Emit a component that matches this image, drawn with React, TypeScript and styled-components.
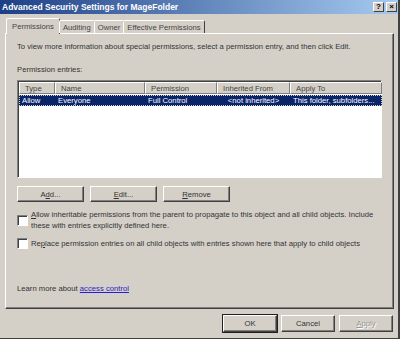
import React from "react";
import styled, { createGlobalStyle, css } from "styled-components";

const GlobalStyle = createGlobalStyle`
  html, body {
    margin: 0;
    padding: 0;
    background: #d4d0c8;
  }
  * {
    box-sizing: border-box;
  }
`;

const Window = styled.div`
  width: 400px;
  height: 339px;
  display: flex;
  flex-direction: column;
  background: #d4d0c8;
  font-family: "Liberation Sans", Arial, sans-serif;
  font-size: 7.7px;
  color: #000;
  border-right: 2px solid #404040;
  border-bottom: 1px solid #404040;
  overflow: hidden;
`;

const TitleBar = styled.div`
  height: 14px;
  display: flex;
  align-items: center;
  justify-content: space-between;
  padding: 0 1px 0 2px;
  background: linear-gradient(to right, #1d3f86, #a6caf0);
`;

const Title = styled.div`
  color: #fff;
  font-weight: bold;
  font-size: 8.5px;
`;

const TitleButtons = styled.div`
  display: flex;
  gap: 2px;
`;

const CaptionButton = styled.div`
  width: 11px;
  height: 10px;
  background: #d4d0c8;
  border: 1px solid;
  border-color: #fff #404040 #404040 #fff;
  display: flex;
  align-items: center;
  justify-content: center;
  font-weight: bold;
  font-size: 8px;
  line-height: 1;
`;

const Body = styled.div`
  flex: 1;
  display: flex;
  flex-direction: column;
  padding: 3px 4px 0 5px;
`;

const TabStrip = styled.div`
  display: flex;
  align-items: flex-end;
  height: 16px;
  padding-left: 3px;
  position: relative;
  z-index: 1;
`;

const Tab = styled.div<{ $active?: boolean }>`
  height: 13px;
  padding: 0 3px;
  display: flex;
  align-items: center;
  color: #444;
  border: 1px solid;
  border-color: #fff #404040 transparent #fff;
  border-bottom: none;
  border-radius: 2px 2px 0 0;
  margin-left: -1px;
  ${(p) =>
    p.$active &&
    css`
      background: #d4d0c8;
      margin: 0 0 -1px -2px;
      padding: 0 5px;
      height: 16px;
    `}
`;

const Panel = styled.div`
  width: 389px;
  height: 276px;
  border: 1px solid;
  border-color: #fff #404040 #404040 #fff;
  box-shadow: inset -1px -1px 0 #808080;
  padding: 8px 11px 0 11px;
  display: flex;
  flex-direction: column;
`;

const Text = styled.div<{ $mt?: number; $mb?: number }>`
  color: #333;
  margin-top: ${(p) => p.$mt ?? 0}px;
  margin-bottom: ${(p) => p.$mb ?? 0}px;
  line-height: 10px;
  white-space: nowrap;
`;

const List = styled.div`
  margin-top: 5px;
  width: 365px;
  height: 98px;
  background: #fff;
  border: 1px solid;
  border-color: #808080 #fff #fff #808080;
  box-shadow: inset 1px 1px 0 #404040;
  padding: 1px 0 0 1px;
`;

const Grid = styled.div`
  display: grid;
  grid-template-columns: 36px 90px 72px 73px 92px;
`;

const HeaderCell = styled.div`
  height: 12px;
  background: #d4d0c8;
  color: #444;
  border: 1px solid;
  border-color: #fff #808080 #808080 #fff;
  padding-left: 5px;
  display: flex;
  align-items: center;
  white-space: nowrap;
`;

const Row = styled.div`
  grid-column: 1 / -1;
  display: grid;
  grid-template-columns: 36px 90px 72px 73px 92px;
  background: #0a246a;
  color: #fff;
  height: 11px;
  margin-top: 1px;
  outline: 1px dotted #d4d0c8;
  outline-offset: -1px;
`;

const Cell = styled.div<{ $center?: boolean }>`
  padding-left: ${(p) => (p.$center ? 0 : 3)}px;
  text-align: ${(p) => (p.$center ? "center" : "left")};
  line-height: 11px;
  white-space: nowrap;
  overflow: hidden;
`;

const ButtonRow = styled.div`
  display: flex;
  gap: 6px;
  margin-top: 8px;
`;

const Button = styled.div<{ $w?: number; $disabled?: boolean; $default?: boolean }>`
  width: ${(p) => p.$w ?? 67}px;
  height: ${(p) => (p.$w ? 17 : 16)}px;
  display: flex;
  align-items: center;
  justify-content: center;
  background: #d4d0c8;
  color: ${(p) => (p.$disabled ? "#9a9890" : "#333")};
  text-shadow: ${(p) => (p.$disabled ? "1px 1px 0 #fff" : "none")};
  border: 1px solid;
  border-color: #fff #404040 #404040 #fff;
  box-shadow: inset -1px -1px 0 #808080;
  ${(p) =>
    p.$default &&
    css`
      outline: 1px solid #202020;
    `}
`;

const Underline = styled.span`
  text-decoration: underline;
`;

const CheckRow = styled.div<{ $mt: number }>`
  display: flex;
  align-items: center;
  gap: 3px;
  margin-top: ${(p) => p.$mt}px;
`;

const Checkbox = styled.div`
  flex: none;
  width: 11px;
  height: 11px;
  background: #fff;
  border: 1px solid;
  border-color: #808080 #fff #fff #808080;
  box-shadow: inset 1px 1px 0 #404040;
`;

const CheckLabel = styled.div<{ $keyFirst?: boolean }>`
  color: #333;
  line-height: 11px;
  ${(p) =>
    p.$keyFirst &&
    css`
      &::first-letter {
        text-decoration: underline;
      }
    `}
`;

const Spacer = styled.div`
  flex: 1;
`;

const Link = styled.span`
  color: #2a1ccc;
  text-decoration: underline;
`;

const Footer = styled.div`
  display: flex;
  justify-content: flex-end;
  gap: 4px;
  padding: 6px 1px 0 0;
`;

const columns = ["Type", "Name", "Permission", "Inherited From", "Apply To"];

export default function App() {
  return (
    <>
      <GlobalStyle />
      <Window>
        <TitleBar>
          <Title>Advanced Security Settings for MageFolder</Title>
          <TitleButtons>
            <CaptionButton>?</CaptionButton>
            <CaptionButton>×</CaptionButton>
          </TitleButtons>
        </TitleBar>
        <Body>
          <TabStrip>
            <Tab $active>Permissions</Tab>
            <Tab>Auditing</Tab>
            <Tab>Owner</Tab>
            <Tab>Effective Permissions</Tab>
          </TabStrip>
          <Panel>
            <Text>
              To view more information about special permissions, select a permission entry, and then click Edit.
            </Text>
            <Text $mt={13}>Permission entries:</Text>
            <List>
              <Grid>
                {columns.map((c) => (
                  <HeaderCell key={c}>{c}</HeaderCell>
                ))}
                <Row>
                  <Cell>Allow</Cell>
                  <Cell>Everyone</Cell>
                  <Cell>Full Control</Cell>
                  <Cell $center>&lt;not inherited&gt;</Cell>
                  <Cell>This folder, subfolders...</Cell>
                </Row>
              </Grid>
            </List>
            <ButtonRow>
              <Button>
                <span>
                  A<Underline>d</Underline>d...
                </span>
              </Button>
              <Button>
                <span>
                  <Underline>E</Underline>dit...
                </span>
              </Button>
              <Button>
                <span>
                  <Underline>R</Underline>emove
                </span>
              </Button>
            </ButtonRow>
            <CheckRow $mt={7}>
              <Checkbox />
              <CheckLabel $keyFirst>
                Allow inheritable permissions from the parent to propagate to this object and all child objects. Include these with entries explicitly defined here.
              </CheckLabel>
            </CheckRow>
            <CheckRow $mt={7}>
              <Checkbox />
              <CheckLabel>
                Re<Underline>p</Underline>lace permission entries on all child objects with entries shown here that apply to child objects
              </CheckLabel>
            </CheckRow>
            <Spacer />
            <Text $mb={14}>
              Learn more about <Link>access control</Link>
            </Text>
          </Panel>
          <Footer>
            <Button $w={54} $default>OK</Button>
            <Button $w={54}>Cancel</Button>
            <Button $w={54} $disabled>
              <span>
                <Underline>A</Underline>pply
              </span>
            </Button>
          </Footer>
        </Body>
      </Window>
    </>
  );
}
